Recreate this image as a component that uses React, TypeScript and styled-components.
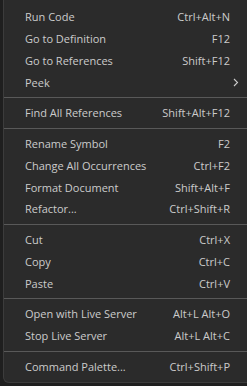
import React from "react";
import styled, { createGlobalStyle } from "styled-components";

const Global = createGlobalStyle`
  html, body {
    margin: 0;
    padding: 0;
    background: #1f1f1f;
    width: 247px;
    height: 386px;
    overflow: hidden;
  }
  #root { width: 247px; }
`;

const Menu = styled.ul`
  list-style: none;
  margin: 0 0 0 3px;
  padding: 6px 0 5px 0;
  width: 252px;
  box-sizing: border-box;
  background: #2b2b2b;
  border: 1px solid #3c3c3c;
  border-top: none;
  border-radius: 0 0 6px 6px;
  font-family: "Open Sans", "Noto Sans", sans-serif;
  font-size: 11px;
  color: #cccccc;
`;

const Item = styled.li`
  display: flex;
  align-items: center;
  justify-content: space-between;
  height: 21.75px;
  padding: 0 24px 0 21px;
  white-space: nowrap;
`;

const Label = styled.span``;

const Shortcut = styled.span<{ $chevron?: boolean }>`
  color: #cccccc;
  margin-right: ${(p) => (p.$chevron ? "-9px" : "0")};
  display: flex;
  align-items: center;
`;

const Separator = styled.li`
  height: 1px;
  background: #595959;
  margin: 4px 0 4px 0;
`;

type Entry = { label: string; key?: string; sub?: boolean } | "sep";

const entries: Entry[] = [
  { label: "Run Code", key: "Ctrl+Alt+N" },
  { label: "Go to Definition", key: "F12" },
  { label: "Go to References", key: "Shift+F12" },
  { label: "Peek", sub: true },
  "sep",
  { label: "Find All References", key: "Shift+Alt+F12" },
  "sep",
  { label: "Rename Symbol", key: "F2" },
  { label: "Change All Occurrences", key: "Ctrl+F2" },
  { label: "Format Document", key: "Shift+Alt+F" },
  { label: "Refactor...", key: "Ctrl+Shift+R" },
  "sep",
  { label: "Cut", key: "Ctrl+X" },
  { label: "Copy", key: "Ctrl+C" },
  { label: "Paste", key: "Ctrl+V" },
  "sep",
  { label: "Open with Live Server", key: "Alt+L Alt+O" },
  { label: "Stop Live Server", key: "Alt+L Alt+C" },
  "sep",
  { label: "Command Palette...", key: "Ctrl+Shift+P" },
];

const Chevron = () => (
  <svg width="6" height="9" viewBox="0 0 6 9" fill="none">
    <path d="M1 1l3.5 3.5L1 8" stroke="#cccccc" strokeWidth="1.1" />
  </svg>
);

export default function App() {
  return (
    <>
      <Global />
      <Menu>
        {entries.map((e, i) =>
          e === "sep" ? (
            <Separator key={i} />
          ) : (
            <Item key={i}>
              <Label>{e.label}</Label>
              {e.sub ? (
                <Shortcut $chevron>
                  <Chevron />
                </Shortcut>
              ) : (
                <Shortcut>{e.key}</Shortcut>
              )}
            </Item>
          )
        )}
      </Menu>
    </>
  );
}
